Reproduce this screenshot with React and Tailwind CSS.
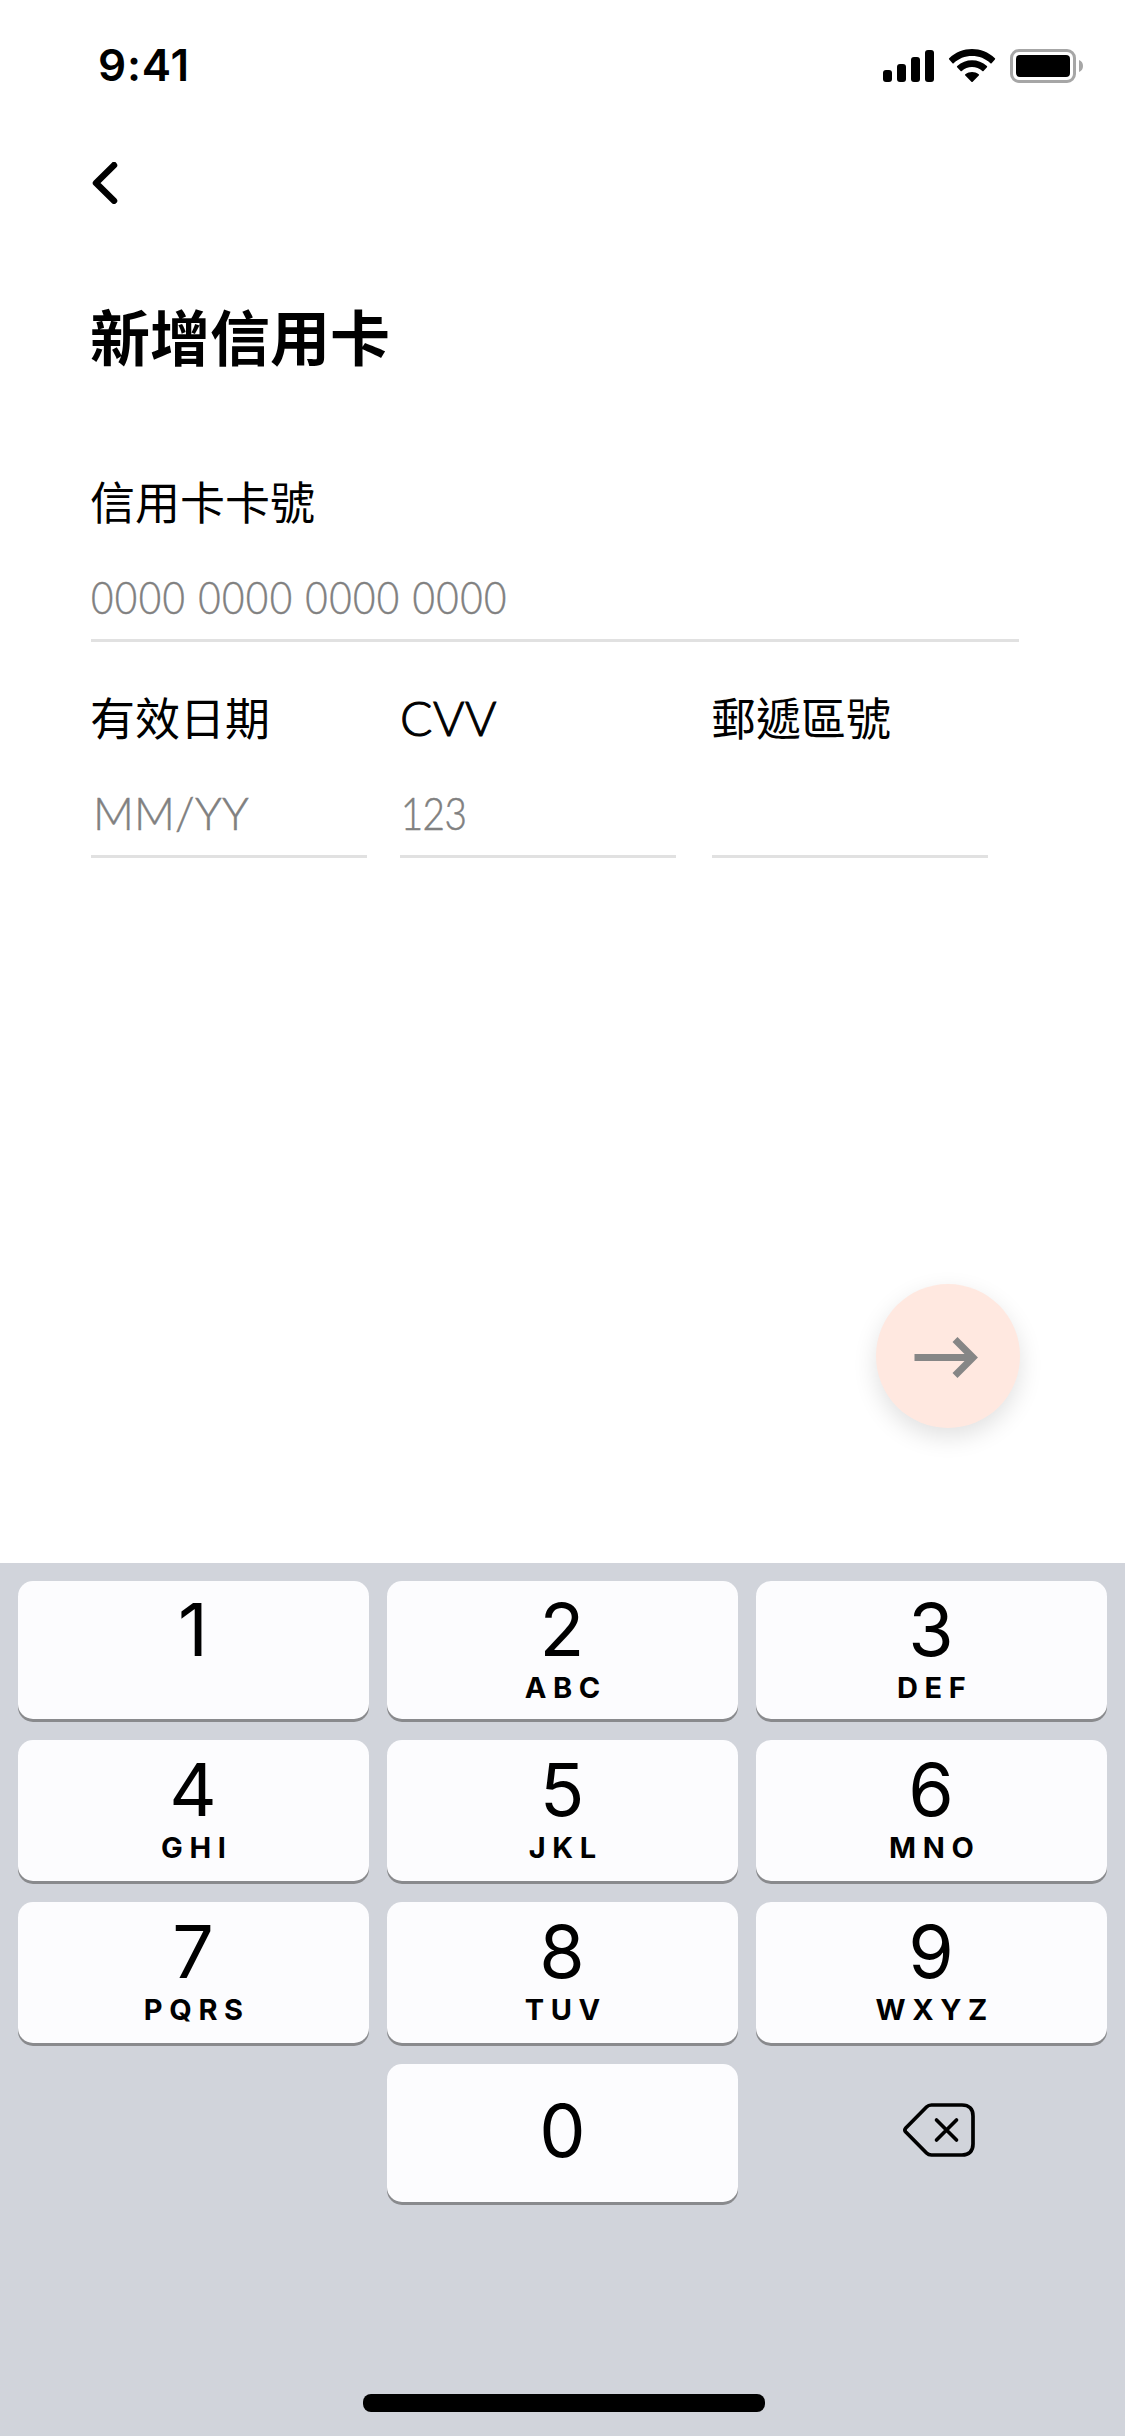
const KEYS = [
  [["1", ""], ["2", "ABC"], ["3", "DEF"]],
  [["4", "GHI"], ["5", "JKL"], ["6", "MNO"]],
  [["7", "PQRS"], ["8", "TUV"], ["9", "WXYZ"]],
];

function StatusBar() {
  return (
    <header className="flex h-[132px] items-center justify-between pl-[98px] pr-[42px]">
      <span className="pb-[2px] font-['Inter',sans-serif] text-[44px] font-semibold leading-[60px] tracking-[0.8px]">9:41</span>
      <svg className="block h-[34px] w-[200px]" viewBox="883 49 200 34">
        <rect x="883" y="70" width="9" height="12" rx="3" />
        <rect x="897" y="64" width="9" height="18" rx="3" />
        <rect x="911" y="57" width="9" height="25" rx="3" />
        <rect x="925" y="50" width="9" height="32" rx="3" />
        <path d="M972 56C979 56 985.600 58.600 990.400 63.200C990.800 63.500 991.300 63.500 991.600 63.200L994.900 59.500C995.300 59.100 995.300 58.600 994.900 58.200C982 46 962 46 949.200 58.200C948.800 58.600 948.800 59.100 949.200 59.500L952.500 63.200C952.800 63.500 953.300 63.500 953.700 63.200C958.400 58.600 965 56 972 56Z" />
        <path d="M972 66.900C975.900 66.900 979.500 68.400 982.300 70.900C982.600 71.300 983.200 71.300 983.500 70.900L987 67.300C987.300 66.900 987.300 66.300 986.900 66C978.500 58.300 965.600 58.300 957.200 66C956.800 66.300 956.800 66.900 957.100 67.300L960.600 70.900C960.900 71.300 961.500 71.300 961.800 70.900C964.600 68.400 968.200 66.900 972 66.900Z" />
        <path d="M978.800 75.600C979.200 75.200 979.200 74.600 978.700 74.300C974.900 71.200 969.200 71.200 965.400 74.300C964.900 74.600 964.900 75.200 965.300 75.600L971.400 81.700C971.800 82.100 972.300 82.100 972.700 81.700Z" />
        <rect x="1011.500" y="50.500" width="63" height="31" rx="7.500" fill="none" stroke="#a6a6a6" strokeWidth="3" />
        <rect x="1016" y="55" width="54" height="22" rx="4" />
        <path d="M1079 60V72A6.500 6.500 0 0 0 1079 60Z" fill="#a6a6a6" />
      </svg>
    </header>
  );
}

function Field({ label, className = "", children }) {
  return (
    <div className={className}>
      <div className="-ml-px h-[60px] whitespace-nowrap pt-px text-[45px] leading-[60px]">{label}</div>
      <div className="mt-[25px] h-[87px] whitespace-nowrap border-b-[3px] border-[#e1e1e1] font-['Lato',sans-serif] text-[45px] font-light leading-[84px] text-[#808080] [-webkit-text-stroke:0.5px_#808080]">
        {children}
      </div>
    </div>
  );
}

function Key({ digit, letters }) {
  return (
    <button className="flex flex-col items-center justify-center rounded-[15px] bg-[#fcfcfe] pt-[5px] shadow-[0_3px_0_#898a8d]">
      <span className="h-[60px] pr-px text-[73.5px] leading-[60px]">{digit}</span>
      <span className="mt-[10px] h-9 pl-[6.5px] text-[29px] font-bold leading-9 tracking-[6.6px]">{letters}</span>
    </button>
  );
}

function Keyboard() {
  return (
    <section className="flex h-[873px] flex-col items-center justify-between bg-[#d1d4db] pb-6 pt-[18px] font-['Inter',sans-serif]">
      <div className="grid w-[1089px] grid-cols-3 grid-rows-[138px_141px_141px_138px] gap-x-[18px] gap-y-[21px]">
        {KEYS.flat().map(([digit, letters]) => (
          <Key key={digit} digit={digit} letters={letters} />
        ))}
        <button className="col-start-2 flex items-center justify-center rounded-[15px] bg-[#fcfcfe] pb-[5px] text-[73.5px] leading-[60px] shadow-[0_3px_0_#898a8d]">
          0
        </button>
        <button className="flex items-center justify-center pb-[6px] pl-[15px]">
          <svg className="block h-[54px] w-[72px]" viewBox="0 0 72 54" fill="none" stroke="#000" strokeWidth="3.7" strokeLinecap="round" strokeLinejoin="round">
            <path d="M28.500 2H59C66 2 70 6 70 13V41C70 48 66 52 59 52H28.500Q25.500 52 23.500 50L2.800 29Q1 27 2.800 25L23.500 4Q25.500 2 28.500 2Z" />
            <path d="M33.500 17L53.500 37M53.500 17L33.500 37" />
          </svg>
        </button>
      </div>
      <div className="ml-[3px] h-[18px] w-[402px] rounded-[8px] bg-black" />
    </section>
  );
}

export default function App() {
  return (
    <div className="flex h-[2436px] w-[1125px] flex-col bg-white font-['Noto_Sans_CJK_TC',sans-serif] text-black">
      <StatusBar />
      <main className="flex flex-1 flex-col pl-[91px] pr-[106px]">
        <button className="flex h-[102px] items-center">
          <svg className="block h-[42px] w-[28px]" viewBox="0 0 28 42" fill="none" stroke="#000" strokeWidth="6.5" strokeLinecap="round" strokeLinejoin="round">
            <path d="M23 3.200L5 21L23 38.800" />
          </svg>
        </button>
        <h1 className="-ml-px mt-[71px] h-[60px] text-[60px] font-bold leading-[60px]">新增信用卡</h1>
        <Field label="信用卡卡號" className="mt-[105px]">
          <span className="inline-block origin-left scale-x-[0.86] tracking-[1.6px]">0000 0000 0000 0000</span>
        </Field>
        <div className="mt-[44px] flex">
          <Field label="有效日期" className="w-[276px]">
            <span className="pl-[2px] tracking-[0.2px]">MM/YY</span>
          </Field>
          <Field label={<span className="pl-[1px] font-['Lato',sans-serif] text-[48px] font-light tracking-[0.6px] [-webkit-text-stroke:1px_#000]">CVV</span>} className="ml-[33px] w-[276px]">
            <span className="inline-block origin-left scale-x-[0.86] pl-px tracking-[-0.8px]">123</span>
          </Field>
          <Field label="郵遞區號" className="ml-[36px] w-[276px]" />
        </div>
        <button className="mb-[135px] ml-auto mr-[-1px] mt-auto flex h-36 w-36 items-center justify-center rounded-full bg-[#ffe8e0] shadow-[0_9px_24px_rgba(0,0,0,0.12)]">
          <svg className="block h-36 w-36" viewBox="0 0 144 144" fill="none" stroke="#868686" strokeWidth="7">
            <path d="M38.500 73.500H96M79 55.500L97 73.500L79 91.500" />
          </svg>
        </button>
      </main>
      <Keyboard />
    </div>
  );
}
